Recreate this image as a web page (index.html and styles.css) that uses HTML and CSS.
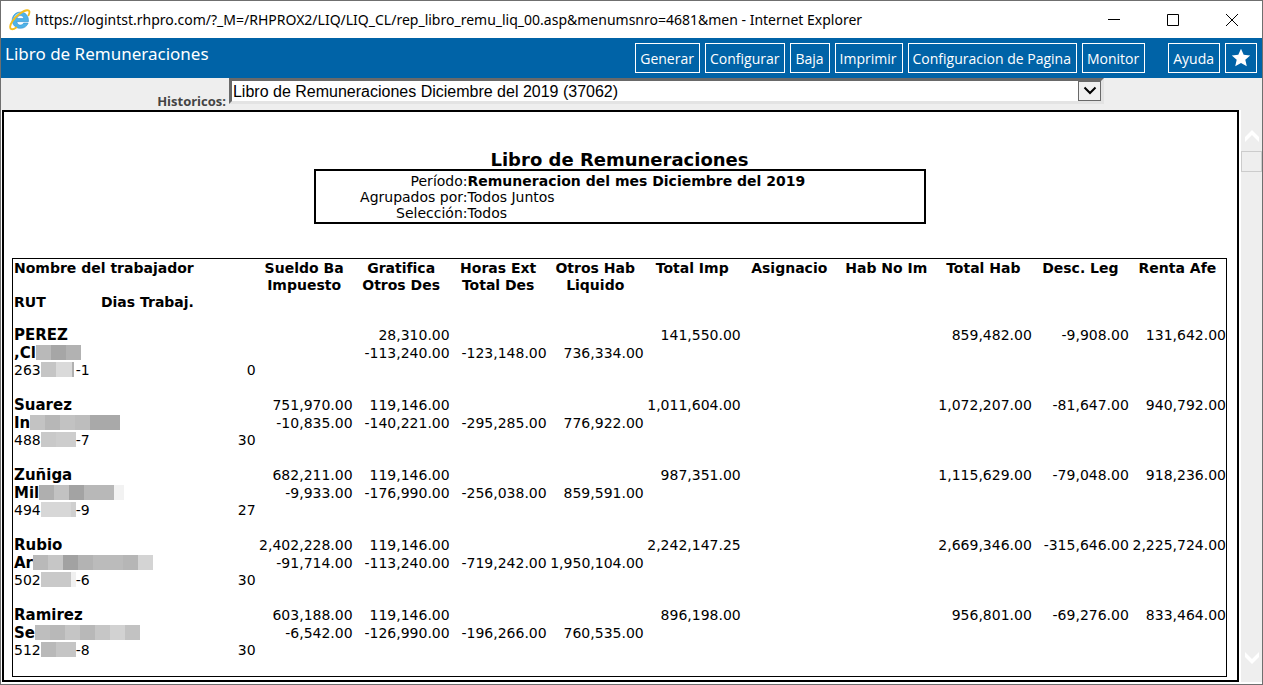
FILE: index.html
```
<!DOCTYPE html>
<html lang="es">
<head>
<meta charset="utf-8">
<title>Libro de Remuneraciones</title>
<link rel="stylesheet" href="styles.css">
</head>
<body>
<div class="window">
  <header class="titlebar">
    <svg class="ie" viewBox="0 0 20 20" aria-hidden="true">
      <path d="M10.4 2.8c-4.300 0-7.500 3.200-7.500 7.400s3.100 7.400 7.500 7.400c3.500 0 6-1.900 7-4.800h-4.100c-.6 1.200-1.500 1.800-2.800 1.800-2 0-3.200-1.200-3.300-3.100h10.500c.4-5-2.500-8.700-7.300-8.700zM7.300 8.700c.3-1.700 1.400-2.700 3.100-2.700s2.800 1 3 2.700z" fill="#4fb3e8" stroke="#2f8ccb" stroke-width=".5"/>
      <path d="M4.500 9.500c.8-3 3-5.200 6-5.600" fill="none" stroke="#a8e0fa" stroke-width="1.300"/>
      <path d="M17.700 5.700C19.300 2.500 18.600.9 16.400 1.100 12.700 1.400 6.500 6 3.200 11c-2.400 3.600-2.900 6.900-.9 7.300 1.200.3 2.900-.4 4.300-1.500" fill="none" stroke="#f3bd1e" stroke-width="1.700" stroke-linecap="round"/>
    </svg>
    <span class="caption">https://logintst.rhpro.com/?_M=/RHPROX2/LIQ/LIQ_CL/rep_libro_remu_liq_00.asp&amp;menumsnro=4681&amp;men - Internet Explorer</span>
    <div class="controls">
      <button type="button" aria-label="Minimizar"><svg viewBox="0 0 12 12"><path d="M0 5.500h12"/></svg></button>
      <button type="button" aria-label="Maximizar"><svg viewBox="0 0 12 12"><path d="M.5.5h11v11H.5z"/></svg></button>
      <button type="button" aria-label="Cerrar"><svg viewBox="0 0 12 12"><path d="M0 0l12 12M12 0L0 12"/></svg></button>
    </div>
  </header>

  <nav class="toolbar">
    <h1>Libro de Remuneraciones</h1>
    <div class="actions">
      <button type="button">Generar</button>
      <button type="button">Configurar</button>
      <button type="button">Baja</button>
      <button type="button">Imprimir</button>
      <button type="button">Configuracion de Pagina</button>
      <button type="button">Monitor</button>
      <button type="button" class="help">Ayuda</button>
      <button type="button" class="star" aria-label="Favorito"><svg viewBox="0 0 20 20"><path d="M10 .8l2.700 6 6.500.7-4.900 4.300 1.500 6.400L10 14.900l-5.800 3.300 1.500-6.400L.8 7.500l6.500-.7z"/></svg></button>
    </div>
  </nav>

  <form class="filter">
    <label for="historicos">Historicos:</label>
    <div class="picker">
      <select id="historicos"><option>Libro de Remuneraciones Diciembre del 2019 (37062)</option></select>
      <span class="arrow"><svg viewBox="0 0 14 10"><path d="M1.500 1.500L7 7l5.500-5.500"/></svg></span>
    </div>
  </form>

  <div class="content">
    <main class="report">
      <h2>Libro de Remuneraciones</h2>
      <dl class="summary">
        <dt>Período:</dt><dd><b>Remuneracion del mes Diciembre del 2019</b></dd>
        <dt>Agrupados por:</dt><dd>Todos Juntos</dd>
        <dt>Selección:</dt><dd>Todos</dd>
      </dl>
      <table class="ledger">
        <colgroup><col class="c-id"><col class="c-days"><col><col><col><col><col><col><col><col><col><col></colgroup>
        <thead>
          <tr><th colspan="2" class="left">Nombre del trabajador</th><th>Sueldo Ba</th><th>Gratifica</th><th>Horas Ext</th><th>Otros Hab</th><th>Total Imp</th><th>Asignacio</th><th>Hab No Im</th><th>Total Hab</th><th>Desc. Leg</th><th>Renta Afe</th></tr>
          <tr><th colspan="2"></th><th>Impuesto</th><th>Otros Des</th><th>Total Des</th><th>Liquido</th><th colspan="6"></th></tr>
          <tr><th class="left">RUT</th><th class="left days">Dias Trabaj.</th><th colspan="10"></th></tr>
        </thead>
        <tbody>
          <tr class="name"><th colspan="2">PEREZ</th><td></td><td>28,310.00</td><td></td><td></td><td>141,550.00</td><td></td><td></td><td>859,482.00</td><td>-9,908.00</td><td>131,642.00</td></tr>
          <tr class="name"><th colspan="2">,Cl<span class="mask m1"></span></th><td></td><td>-113,240.00</td><td>-123,148.00</td><td>736,334.00</td><td colspan="6"></td></tr>
          <tr><td class="left">263<span class="mask id1"></span>-1</td><td>0</td><td colspan="10"></td></tr>
        </tbody>
        <tbody>
          <tr class="name"><th colspan="2">Suarez</th><td>751,970.00</td><td>119,146.00</td><td></td><td></td><td>1,011,604.00</td><td></td><td></td><td>1,072,207.00</td><td>-81,647.00</td><td>940,792.00</td></tr>
          <tr class="name"><th colspan="2">In<span class="mask m2"></span></th><td>-10,835.00</td><td>-140,221.00</td><td>-295,285.00</td><td>776,922.00</td><td colspan="6"></td></tr>
          <tr><td class="left">488<span class="mask id2"></span>-7</td><td>30</td><td colspan="10"></td></tr>
        </tbody>
        <tbody>
          <tr class="name"><th colspan="2">Zuñiga</th><td>682,211.00</td><td>119,146.00</td><td></td><td></td><td>987,351.00</td><td></td><td></td><td>1,115,629.00</td><td>-79,048.00</td><td>918,236.00</td></tr>
          <tr class="name"><th colspan="2">Mil<span class="mask m3"></span></th><td>-9,933.00</td><td>-176,990.00</td><td>-256,038.00</td><td>859,591.00</td><td colspan="6"></td></tr>
          <tr><td class="left">494<span class="mask id3"></span>-9</td><td>27</td><td colspan="10"></td></tr>
        </tbody>
        <tbody>
          <tr class="name"><th colspan="2">Rubio</th><td>2,402,228.00</td><td>119,146.00</td><td></td><td></td><td>2,242,147.25</td><td></td><td></td><td>2,669,346.00</td><td>-315,646.00</td><td>2,225,724.00</td></tr>
          <tr class="name"><th colspan="2">Ar<span class="mask m4"></span></th><td>-91,714.00</td><td>-113,240.00</td><td>-719,242.00</td><td>1,950,104.00</td><td colspan="6"></td></tr>
          <tr><td class="left">502<span class="mask id4"></span>-6</td><td>30</td><td colspan="10"></td></tr>
        </tbody>
        <tbody>
          <tr class="name"><th colspan="2">Ramirez</th><td>603,188.00</td><td>119,146.00</td><td></td><td></td><td>896,198.00</td><td></td><td></td><td>956,801.00</td><td>-69,276.00</td><td>833,464.00</td></tr>
          <tr class="name"><th colspan="2">Se<span class="mask m5"></span></th><td>-6,542.00</td><td>-126,990.00</td><td>-196,266.00</td><td>760,535.00</td><td colspan="6"></td></tr>
          <tr><td class="left">512<span class="mask id5"></span>-8</td><td>30</td><td colspan="10"></td></tr>
        </tbody>
      </table>
    </main>
    <div class="scroll" aria-hidden="true">
      <svg viewBox="0 0 14 12"><path d="M0 12V7l7-7 7 7v5L7 5z"/></svg>
      <span class="thumb"></span>
      <svg class="down" viewBox="0 0 14 12"><path d="M0 0v5l7 7 7-7V0L7 7z"/></svg>
    </div>
  </div>
</div>
</body>
</html>
```
FILE: styles.css
```
* { box-sizing: border-box; }
body {
  margin: 0;
  background: #fff;
  color: #000;
  font-family: "DejaVu Sans", Verdana, sans-serif;
  font-size: 14px;
}
button { font: inherit; margin: 0; cursor: pointer; }
.window {
  display: flex;
  flex-direction: column;
  min-height: 100vh;
  border: 1px solid #6f6f6f;
}

/* Title bar */
.titlebar {
  display: flex;
  align-items: center;
  height: 37px;
  padding: 0 1px 0 8px;
  background: #fff;
}
.ie { width: 22px; height: 22px; margin-right: 4px; flex: none; }
.caption {
  flex: 1;
  white-space: nowrap;
  font: 14px/20px "Noto Sans", "Segoe UI", sans-serif;
}
.controls { display: flex; }
.controls button {
  display: flex;
  align-items: center;
  justify-content: center;
  width: 59px;
  height: 37px;
  padding: 0;
  border: 0;
  background: none;
}
.controls svg { width: 12px; height: 12px; fill: none; stroke: #000; }

/* Blue toolbar */
.toolbar {
  display: flex;
  justify-content: space-between;
  height: 40px;
  padding: 5px 5px 5px 4px;
  background: #0063a7;
  color: #fff;
  font-family: "Noto Sans", "Segoe UI", sans-serif;
}
.toolbar h1 { margin: 0; font-size: 17px; font-weight: 400; line-height: 22px; }
.actions { display: flex; gap: 5px; }
.actions button {
  padding: 1px 5px 0 4px;
  border: 1px solid #fff;
  background: transparent;
  color: #fff;
  font-family: "Open Sans", "Segoe UI", sans-serif;
  font-size: 14px;
  font-weight: 500;
  white-space: nowrap;
}
.actions .help { margin-left: 18px; }
.actions .star { display: flex; align-items: center; padding: 0 5px; }
.star svg { width: 20px; height: 20px; fill: #fff; }

/* Report selector */
.filter {
  display: flex;
  height: 32px;
  background: #eee;
}
.filter label {
  width: 18%;
  margin-right: 1px;
  padding-top: 14px;
  padding-right: 2px;
  text-align: right;
  color: #444;
  font: bold 13px/18px "Open Sans", sans-serif;
}
.picker {
  display: flex;
  flex: 1;
  margin-right: 158px;
  height: 26px;
  border: 3px solid;
  border-color: #696969 #e3e3e3 #e3e3e3 #696969;
  background: #fff;
}
.picker select {
  flex: 1;
  appearance: none;
  padding: 1px 1px 0;
  border: 0;
  background: #fff;
  color: #000;
  font: 16px/19px "Liberation Sans", Arial, sans-serif;
}
.arrow {
  display: flex;
  align-items: center;
  justify-content: center;
  width: 23px;
  border: 1px solid #696969;
  background: #f0f0f0;
  pointer-events: none;
}
.arrow svg { width: 14px; height: 10px; fill: none; stroke: #000; stroke-width: 2; }

/* Report page */
.content { display: flex; flex: 1; background: #fff; padding: 0 0 2px 1px; }
.report {
  flex: 1;
  padding: 38px 10px 2px 8px;
  border: 2px solid #000;
}
.report h2 { margin: 0; text-align: center; font-size: 18px; line-height: 19px; }
.summary {
  display: grid;
  grid-template-columns: 25% 1fr;
  width: 50%;
  min-width: 612px;
  margin: 0 auto 34px;
  padding: 2px 0 1px;
  border: 2px solid #000;
  line-height: 16px;
}
.summary dt { text-align: right; }
.summary dd { margin: 0; }
.ledger {
  width: 100%;
  table-layout: fixed;
  border-collapse: separate;
  border-spacing: 0;
  border: 1px solid #000;
  padding-top: 1px;
  line-height: 17px;
}
.ledger col { width: 8%; }
.ledger .c-id { width: 7%; }
.ledger .c-days { width: 13%; }
.ledger th, .ledger td { padding: 0; height: 17px; text-align: right; white-space: nowrap; vertical-align: middle; }
.ledger thead th { text-align: center; }
.ledger .left { padding-left: 1px; text-align: left; }
.ledger .days { padding-left: 3px; }
.ledger .name th { height: 18px; padding-left: 1px; text-align: left; font-size: 15px; line-height: 18px; }
.ledger tr:last-child > * { height: 34px; vertical-align: top; }
.ledger thead tr:last-child > * { height: 32px; line-height: 16px; }

/* Masked personal data */
.mask { display: inline-block; height: 15px; vertical-align: -2px; }
.m1 { width: 45px; background: linear-gradient(90deg, #b9b9b9 15px, #a6a6a6 15px 30px, #b2b2b2 30px); }
.m2 { width: 90px; background: linear-gradient(90deg, #c3c3c3 15px, #b7b7b7 15px 30px, #c2c2c2 30px 45px, #bdbdbd 45px 60px, #a9a9a9 60px); }
.m3 { width: 85px; background: linear-gradient(90deg, #afafaf 15px, #c2c2c2 15px 30px, #a3a3a3 30px 45px, #b8b8b8 45px 75px, #f2f2f2 75px); }
.m4 { width: 120px; background: linear-gradient(90deg, #b9b9b9 15px, #c6c6c6 15px 30px, #a2a2a2 30px 45px, #b3b3b3 45px 60px, #bbb 60px 90px, #b6b6b6 90px 105px, #d4d4d4 105px); }
.m5 { width: 105px; background: linear-gradient(90deg, #bebebe 15px, #b8b8b8 15px 30px, #c5c5c5 30px 45px, #b8b8b8 45px 60px, #c6c6c6 60px 75px, #d2d2d2 75px 90px, #c2c2c2 90px); }
.id1 { width: 35px; background: linear-gradient(90deg, #c5c5c5 15px, #dadada 15px 31px, #b0b0b0 31px 33px, #fff 33px); }
.id2 { width: 35px; background: linear-gradient(90deg, #c9c9c9 15px, #cdcdcd 15px); }
.id3 { width: 35px; background: linear-gradient(90deg, #d7d7d7 30px, #cfcfcf 30px); }
.id4 { width: 35px; background: linear-gradient(90deg, #c9c9c9 30px, #f0f0f0 30px); }
.id5 { width: 35px; background: linear-gradient(90deg, #b9b9b9 15px, #c5c5c5 15px); }

/* Scroll bar */
.scroll {
  display: flex;
  flex-direction: column;
  align-items: center;
  width: 21px;
  margin-left: 2px;
  padding: 20px 0 18px;
  background: #eee;
}
.scroll svg { width: 14px; height: 12px; fill: #fff; }
.thumb { width: 21px; height: 21px; margin-top: 9px; border: 1px solid #ccc; }
.scroll .down { margin-top: auto; }
```
